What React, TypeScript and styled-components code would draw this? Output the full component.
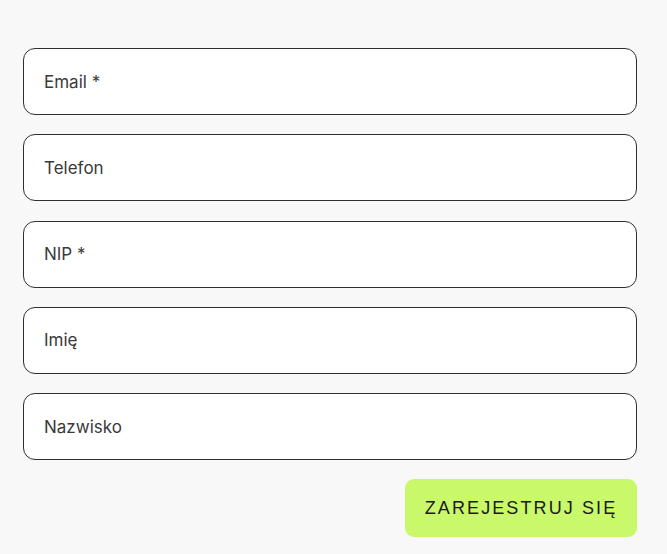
import * as React from 'react';
import styled, { createGlobalStyle } from 'styled-components';

const GlobalStyle = createGlobalStyle`
  html, body {
    margin: 0;
    padding: 0;
    background: #f8f8f8;
  }
  * {
    box-sizing: border-box;
  }
`;

const Page = styled.div`
  min-height: 554px;
  padding: 48px 30px 0 23px;
  background: #f8f8f8;
`;

const Form = styled.form`
  display: flex;
  flex-direction: column;
  gap: 19.25px;
`;

const Field = styled.input`
  display: block;
  width: 100%;
  height: 67px;
  padding: 0 20px;
  border: 1px solid #2f2f2f;
  border-radius: 12px;
  background: #fff;
  font-family: Inter, 'Noto Sans', sans-serif;
  font-size: 17px;
  color: #333;
  outline: none;

  &::placeholder {
    color: #3a3a3a;
    opacity: 1;
  }
`;

const Actions = styled.div`
  display: flex;
  justify-content: flex-end;
`;

const SubmitButton = styled.button`
  height: 58px;
  width: 232px;
  padding: 0;
  border: none;
  border-radius: 9px;
  background: #c9f96b;
  color: #1a1a1a;
  font-family: 'Liberation Sans', Arial, sans-serif;
  font-size: 18px;
  letter-spacing: 2.1px;
  cursor: pointer;
`;

const fields = [
  { name: 'email', placeholder: 'Email *', type: 'email' },
  { name: 'phone', placeholder: 'Telefon', type: 'tel' },
  { name: 'nip', placeholder: 'NIP *', type: 'text' },
  { name: 'firstName', placeholder: 'Imię', type: 'text' },
  { name: 'lastName', placeholder: 'Nazwisko', type: 'text' }
];

export default function App() {
  return (
    <>
      <GlobalStyle />
      <Page>
        <Form onSubmit={e => e.preventDefault()}>
          {fields.map(f => (
            <Field key={f.name} name={f.name} type={f.type} placeholder={f.placeholder} />
          ))}
          <Actions>
            <SubmitButton type="submit">ZAREJESTRUJ SIĘ</SubmitButton>
          </Actions>
        </Form>
      </Page>
    </>
  );
}
